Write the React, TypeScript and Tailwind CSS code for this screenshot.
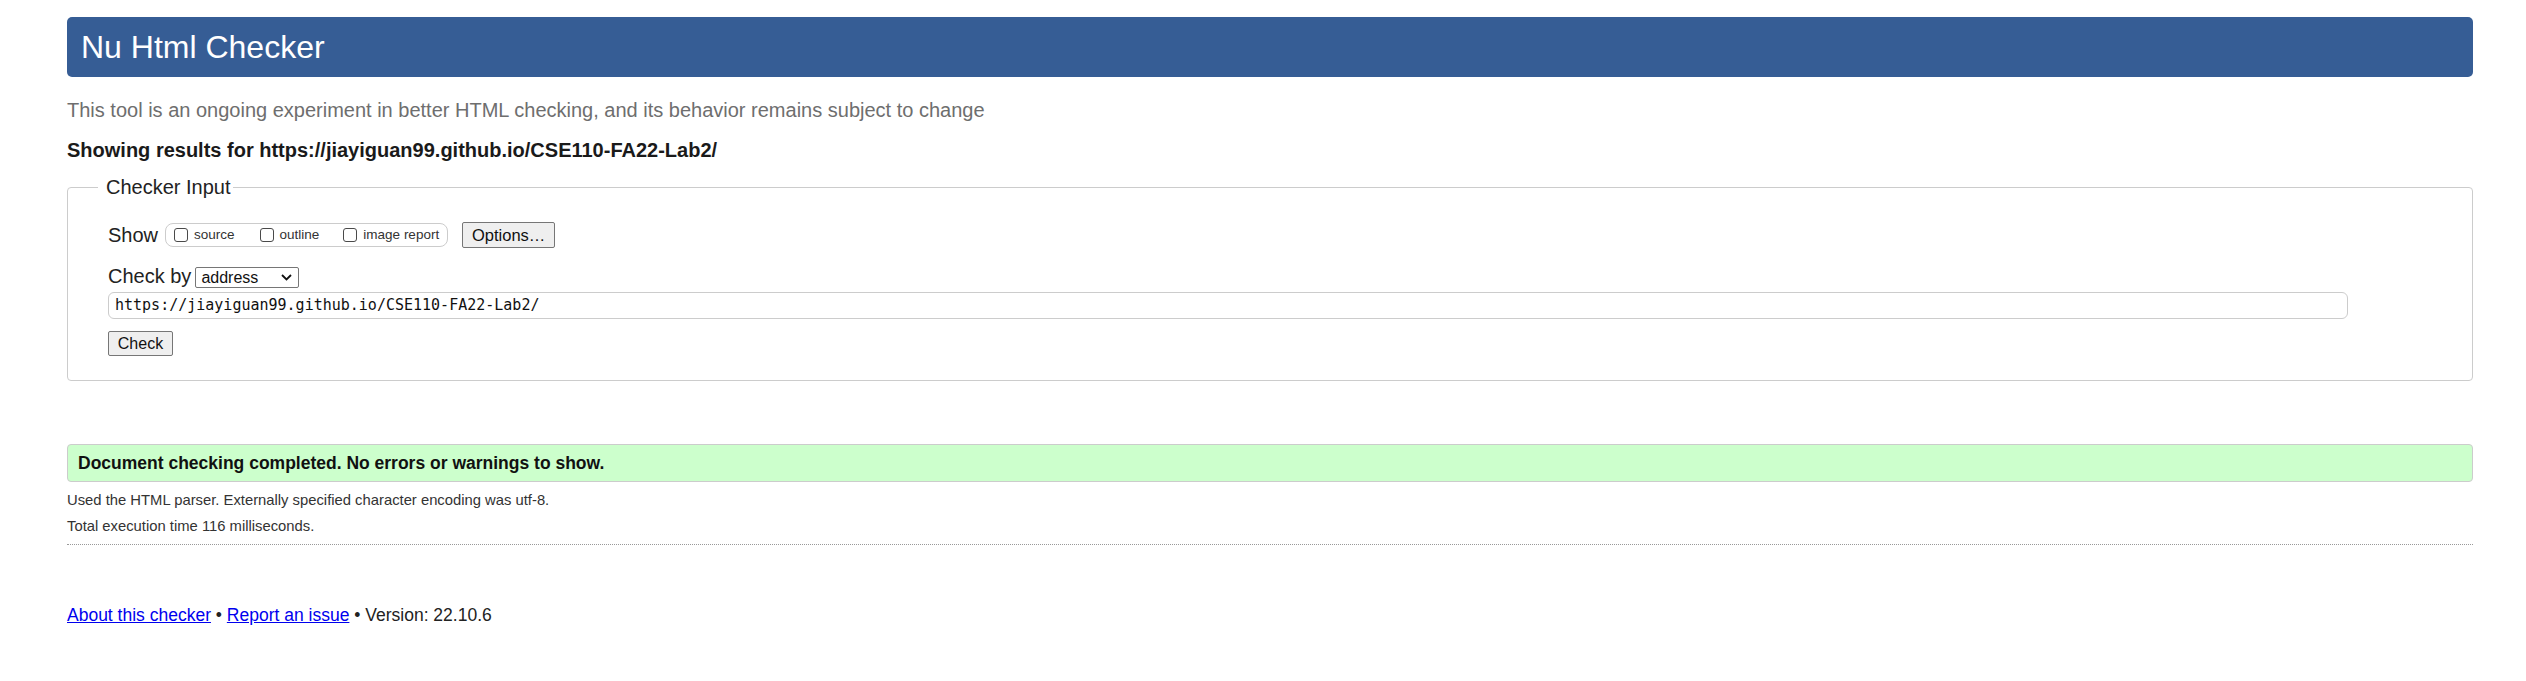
import React from "react";

function Chevron() {
  return (
    <svg width="11" height="7" viewBox="0 0 11 7" className="block">
      <path d="M1 1 L5.5 5.5 L10 1" fill="none" stroke="#111" strokeWidth="1.8" />
    </svg>
  );
}

function Box() {
  return (
    <span className="inline-block w-[14px] h-[14px] border border-[#4a4a4a] rounded-[3px] bg-white mr-[6px] translate-y-[0px]" />
  );
}

export default function App() {
  return (
    <div className="min-h-[681px] bg-white pt-[17px] pl-[67px] pr-[53px] text-[#222] font-['Liberation_Sans',Arial,sans-serif]">
      <div className="h-[60px] bg-[#365d95] rounded-[5px] flex items-center pl-[14px]">
        <span className="text-white text-[32px] leading-[36px]">Nu Html Checker</span>
      </div>

      <p className="mt-[22px] text-[20px] leading-[23px] text-[#6e6e6e]">
        This tool is an ongoing experiment in better HTML checking, and its behavior remains subject to change
      </p>
      <p className="mt-[17px] text-[20px] leading-[23px] font-bold text-[#1a1a1a]">
        Showing results for https://jiayiguan99.github.io/CSE110-FA22-Lab2/
      </p>

      <div className="relative mt-[25px] border border-[#cccccc] rounded-[4px] pt-[34px] pb-[24px] pl-[40px] pr-[124px]">
        <span className="absolute -top-[12px] left-[30px] bg-white pl-[8px] pr-[2px] text-[20px] leading-[23px] text-[#222]">
          Checker Input
        </span>

        <div className="flex items-center h-[26px]">
          <span className="text-[20px] leading-[23px]">Show</span>
          <div className="ml-[7px] h-[24px] border border-[#cccccc] rounded-[8px] flex items-center pl-[8px] pr-[8px] text-[13.5px] text-[#333]">
            <label className="flex items-center">
              <Box />
              <span>source</span>
            </label>
            <label className="flex items-center ml-[25px]">
              <Box />
              <span>outline</span>
            </label>
            <label className="flex items-center ml-[24px]">
              <Box />
              <span>image report</span>
            </label>
          </div>
          <button className="ml-[14px] h-[26px] w-[93px] bg-[#efefef] border border-[#767676] rounded-[2px] text-[16.5px] text-[#111] flex items-center justify-center">
            Options…
          </button>
        </div>

        <div className="flex items-end h-[23px] mt-[17px]">
          <span className="text-[20px] leading-[23px]">Check by</span>
          <div className="ml-[4px] h-[21px] w-[104px] border border-[#767676] rounded-[2px] flex items-center justify-between pl-[5px] pr-[6px] text-[16px] text-[#111] bg-white">
            <span>address</span>
            <Chevron />
          </div>
        </div>

        <div className="mt-[4px] h-[27px] w-full border border-[#cccccc] rounded-[6px] flex items-center pl-[6px] font-['DejaVu_Sans_Mono',monospace] text-[15px] text-[#111]">
          https://jiayiguan99.github.io/CSE110-FA22-Lab2/
        </div>

        <button className="mt-[12px] h-[25px] w-[65px] bg-[#efefef] border border-[#767676] rounded-[2px] text-[16px] text-[#111] flex items-center justify-center">
          Check
        </button>
      </div>

      <div className="mt-[63px] h-[38px] bg-[#ccffcc] border border-[#cccccc] rounded-[4px] flex items-center pl-[10px]">
        <span className="font-bold text-[17.5px] text-[#111]">Document checking completed. No errors or warnings to show.</span>
      </div>

      <p className="mt-[5px] text-[14.8px] leading-[26px] text-[#333]">
        Used the HTML parser. Externally specified character encoding was utf-8.
      </p>
      <p className="text-[14.8px] leading-[26px] text-[#333]">Total execution time 116 milliseconds.</p>
      <div className="mt-[5px] border-t border-dotted border-[#999]" />

      <p className="mt-[59px] text-[17.5px] leading-[22px] text-[#222]">
        <a className="text-[#0000ee] underline" href="#">About this checker</a> •{" "}
        <a className="text-[#0000ee] underline" href="#">Report an issue</a> • Version: 22.10.6
      </p>
    </div>
  );
}
